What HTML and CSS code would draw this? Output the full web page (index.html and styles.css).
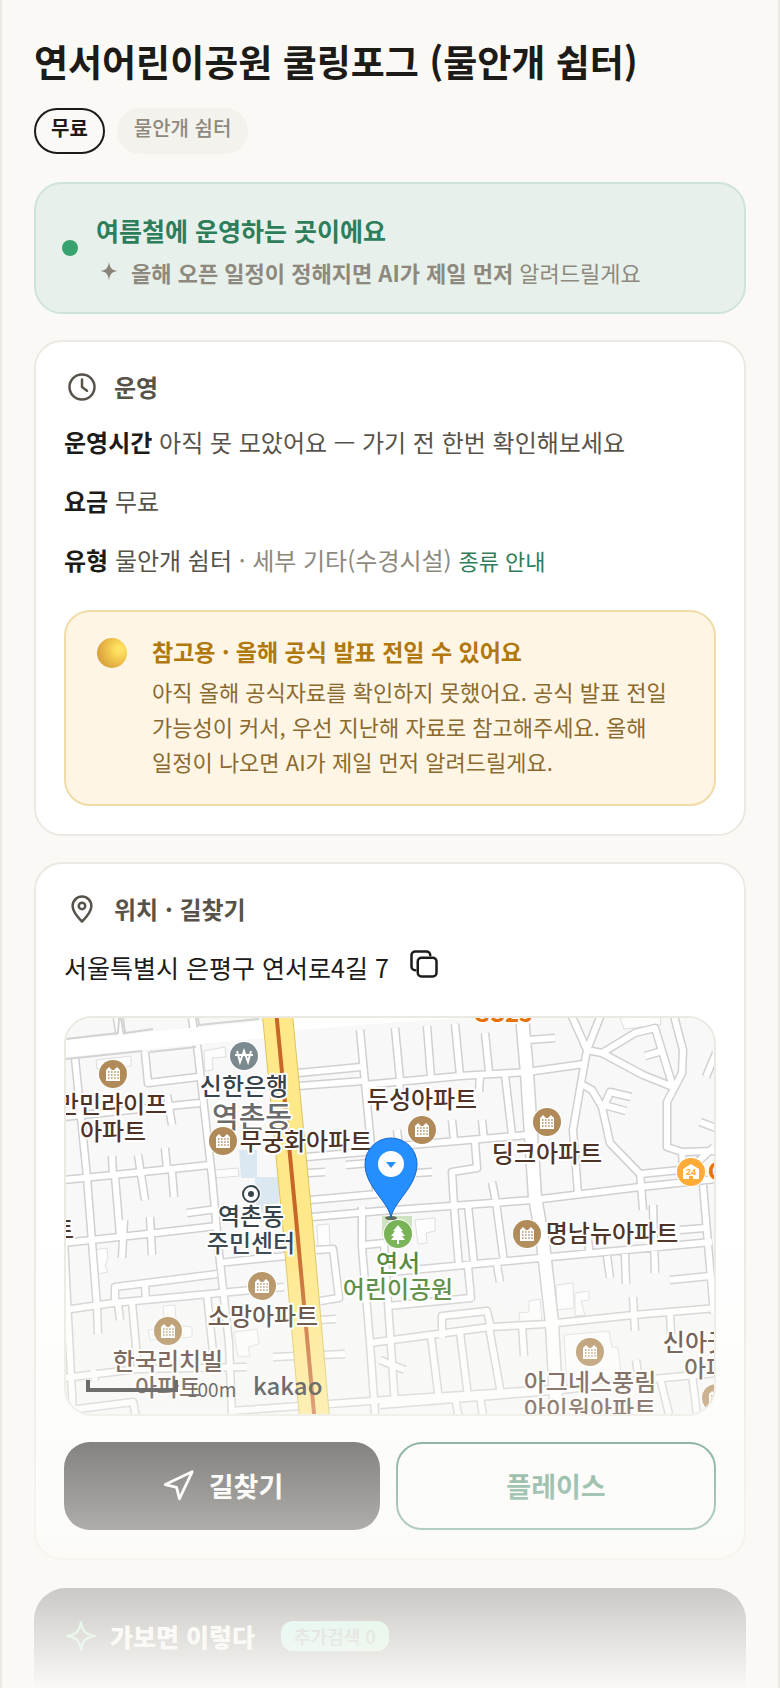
FILE: index.html
```html
<!DOCTYPE html>
<html lang="ko">
<head>
    <meta charset="UTF-8">
    <meta name="viewport" content="width=device-width, initial-scale=1.0">
    <title>연서어린이공원 쿨링포그 (물안개 쉼터)</title>
    <link rel="stylesheet" href="styles.css">
</head>
<body>
    <main class="page">
        <h1>연서어린이공원 쿨링포그 (물안개 쉼터)</h1>

        <div class="chips">
            <span class="chip chip-free">무료</span>
            <span class="chip">물안개 쉼터</span>
        </div>

        <section class="status">
            <span class="status-dot"></span>
            <div>
                <h2 class="status-title">여름철에 운영하는 곳이에요</h2>
                <p class="status-sub">
                    <svg class="spark" viewBox="0 0 24 24"><path d="M12 1c1 7 3 10 10 11-7 1-9 4-10 11-1-7-3-10-10-11 7-1 9-4 10-11z"/></svg>
                    <span><b>올해 오픈 일정이 정해지면 AI가 제일 먼저</b> 알려드릴게요</span>
                </p>
            </div>
        </section>

        <section class="card">
            <h2 class="card-head">
                <svg class="icon" viewBox="0 0 24 24"><circle cx="12" cy="12" r="10"/><path d="M12 6v6l4 3"/></svg>
                운영
            </h2>
            <p class="row"><b>운영시간</b> 아직 못 모았어요 — 가기 전 한번 확인해보세요</p>
            <p class="row"><b>요금</b> 무료</p>
            <p class="row"><b>유형</b> 물안개 쉼터 <span class="muted">· 세부 기타(수경시설)</span> <a class="guide" href="#">종류 안내</a></p>

            <div class="notice">
                <span class="orb"></span>
                <div class="notice-body">
                    <h3>참고용 · 올해 공식 발표 전일 수 있어요</h3>
                    <p>아직 올해 공식자료를 확인하지 못했어요. 공식 발표 전일 가능성이 커서, 우선 지난해 자료로 참고해주세요. 올해 일정이 나오면 AI가 제일 먼저 알려드릴게요.</p>
                </div>
            </div>
        </section>

        <section class="card">
            <h2 class="card-head">
                <svg class="icon" viewBox="0 0 24 24"><path d="M19.500 9.500c0 5.500-7.500 12.500-7.500 12.500S4.500 15 4.500 9.500a7.500 7.500 0 0 1 15 0z"/><circle cx="12" cy="9.500" r="2.600"/></svg>
                위치 · 길찾기
            </h2>
            <div class="address">
                <span>서울특별시 은평구 연서로4길 7</span>
                <button class="copy" type="button" aria-label="주소 복사">
                    <svg class="icon" viewBox="0 0 24 24"><rect x="7" y="7" width="15" height="15" rx="3"/><path d="M5 17a3 3 0 0 1-3-3V5a3 3 0 0 1 3-3h9a3 3 0 0 1 3 3"/></svg>
                </button>
            </div>

            <div class="map">
                <svg class="map-canvas" viewBox="66 1018 648 396" preserveAspectRatio="xMidYMid slice">
                    <defs>
                        <g id="apt">
                            <circle r="15" fill="#fff"/>
                            <circle r="14" fill="#b08b59"/>
                            <path d="M-7 7V-4l3-3 3 3h2l3-3 3 3V7z" fill="#fff"/>
                            <path d="M-5-2H6M-5 1H6M-5 4H6" stroke="#b08b59" stroke-width="1.500" stroke-dasharray="1.500 1.600"/>
                        </g>
                        <g id="streets">
                            <path d="M75 1058L87 1177 97 1307 98 1334M64 1240L73 1414M145 1052l3 31 50-6M197 1045l15 132 7 76 10 90 3 71"/>
                            <path d="M64 1117l66-7 70-7M64 1180l69-7 77-8M64 1243l83-9 70-8M64 1310l49-7 107-10 64-6M218 1263l68-7M187 1213l30-4"/>
                            <path d="M115 1305v-18l102-13M145 1285l1 15M112 1156l1 18M138 1155l7 45M165 1148l2 22M167 1095l5 30M172 1172l2 25M115 1176l5 60M124 1220l-2 38M150 1217l2 38M118 1304l2 16M132 1302l6 67M207 1295l8 76M64 1378l74-9 109-2M70 1410l63-8 3 14M93 1370l2 11M230 1411l170-12 156-10"/>
                            <path d="M117 1018l4 24M192 1018l2 14M298 1073l63-6M298 1086l66-5M360 1030l5 53 6 62 6 52M295 1158l80-7M346 1165l24-2M308 1173l17-1M310 1200l67-6M273 1357l72-3M320 1320l16-1M316 1250l17-1 6 49-19 3M312 1217l68-6 153-11 107-13 76-8"/>
                            <path d="M362 1207v40l8 96 5 71M364 1245l20-2M370 1343l120-16 57-3 86-9 84-7M395 1028l5 52M427 1026l4 52M455 1024l5 52M485 1033l4 39M364 1085l96-9 67-4 57-8M375 1148l152-13M505 1075l7 60M480 1075l-1 17M399 1080l2 20M452 1120l2 20M482 1120l2 20M397 1130l2 15M475 1142l2 26-25 4 2 34 5 61M432 1172l-16 1M492 1182l4 20M528 1040l27-2"/>
                            <path d="M570 1012l17 38-6 33-8 47 5 64M602 1012l-15 38 15 3 41 22 30 12M602 1053l33-20 20-5 18 59M673 1012l10 38-1 23-15 29v45l15 5 34-1M583 1085l9 5 10 17 8 36 30 31 50-5 24-22M605 1104l5-12 21 5M604 1105l22 6M645 1056l17-5M716 1053l-10 24M700 1122l16 6M640 1172l3 38M682 1150l1 20M703 1185l11 129"/>
                            <path d="M380 1273l160-15 172-16M680 1230l25-2M670 1280l40-4M588 1240l2 16M607 1256l3 22M625 1254l1 30M653 1205l2 68M468 1205l6 58M496 1202l8 60M468 1267l3 31-83 8M497 1265l3 17M384 1245l11 160M442 1338v-22l45-5 4 18M431 1336l8 64M460 1332l8 65M489 1327l12 67M522 1324l2 32M633 1297l2 34M670 1312l1 22M380 1405l160-13 40-4M636 1360l2 14M620 1382l97-9M660 1378l9 36M692 1375l5 39M455 1398l4 20M480 1396l3 20M380 1360l25 10"/>
                        </g>
                        <g id="avenues">
                            <path d="M521 1005l6 68 8 124 8 46 9 80 5 95"/>
                        </g>
                    </defs>

                    <rect x="60" y="1010" width="660" height="410" fill="#f8f8f8"/>
                    <path d="M382 1216h30v20h-30z" fill="#cfe3c0"/>
                    <g class="building">
                        <path d="M204 1051l21-4 1 10-14 1 1 12-8 1zM96 1060l35-4v10l-34 3zM94 1250l13-2 1 10-3 8 3 6-10 2zM163 1306l12-1 1 15h-12zM148 1330l35-4 9 1v10l-42 3zM234 1332l23-3 2 15-11 3 2 9-12 1zM317 1225l12-1 1 22-12 1zM415 1220l20-2v13l-9 2 1 10-9 1zM620 1018l40-3 1 10-37 4zM556 1285l17-2 1 25-17 2zM575 1293l14-2v9l-8 1 4 14-10 1zM519 1313l10-1v-11l11-2 2 22-22 2zM564 1335l45-4 3 16 6 1 4 34-55 4zM215 1170l23-2 1 8-23 2z"/>
                    </g>
                    <use href="#streets" class="road-edge"/>
                    <use href="#avenues" class="road-edge wide"/>
                    <use href="#streets" class="road"/>
                    <use href="#avenues" class="road wide"/>
                    <path d="M239 1150h18v27h22v37h-16l-7-8-1-28h-14z" fill="#dce8f1"/>
                    <path d="M60 1049l210-20M290 1022l90-7 160-11" stroke="#fff" stroke-width="17" fill="none"/>
                    <path d="M66 1039l52-6 1-15M123 1018l2 15 28-4M198 1018l1 7 60-6M66 1059l76-8M150 1052l46-5" class="edge-line"/>

                    <path d="M277 1010l20 208 18 206" class="main-road-side"/>
                    <path d="M277 1010l20 208 18 206" class="main-road"/>
                    <path d="M276 1010l20 208 19 206" class="main-line"/>

                    <text class="district" x="252" y="1128">역촌동</text>
                    <use href="#apt" x="113" y="1074"/>
                    <use href="#apt" x="223" y="1141"/>
                    <use href="#apt" x="262" y="1286"/>
                    <use href="#apt" x="168" y="1331"/>
                    <use href="#apt" x="422" y="1130"/>
                    <use href="#apt" x="547" y="1122"/>
                    <use href="#apt" x="527" y="1234"/>
                    <use href="#apt" x="590" y="1352"/>
                    <use href="#apt" x="716" y="1398"/>

                    <g transform="translate(244 1056)">
                        <circle r="15" fill="#fff"/>
                        <circle r="14" fill="#7c8a90"/>
                        <path d="M-7-5l3 11L0-5l4 11 3-11M-9-1H9" fill="none" stroke="#fff" stroke-width="2"/>
                    </g>
                    <g transform="translate(251 1194)">
                        <circle r="10" fill="#fff"/>
                        <circle r="8" fill="#fff" stroke="#37434b" stroke-width="2"/>
                        <circle r="3" fill="#37434b"/>
                    </g>
                    <g transform="translate(691 1172)">
                        <circle r="15" fill="#fff"/>
                        <circle r="14" fill="#ffab38"/>
                        <path d="M-8-3L0-8l8 5V7H2V4h-4v3h-6z" fill="#fff"/>
                        <text class="store-num" y="3">24</text>
                    </g>
                    <g transform="translate(398 1234)">
                        <circle r="15" fill="#fff"/>
                        <circle r="14" fill="#77b255"/>
                        <path d="M0-9l5 6H3l4 5H4l3 4H1v4h-2V6h-6l3-4h-3l4-5h-2z" fill="#fff"/>
                    </g>

                    <g class="place">
                        <text x="112" y="1113">만민라이프</text>
                        <text x="113" y="1140">아파트</text>
                        <text x="306" y="1150">무궁화아파트</text>
                        <text x="422" y="1108">두성아파트</text>
                        <text x="547" y="1162">딩크아파트</text>
                        <text x="612" y="1242">명남뉴아파트</text>
                        <text x="263" y="1325">소망아파트</text>
                        <text x="168" y="1370">한국리치빌</text>
                        <text x="168" y="1396">아파트</text>
                        <text x="590" y="1391">아그네스풍림</text>
                        <text x="590" y="1418">아이원아파트</text>
                        <text x="718" y="1351">신아굿모닝</text>
                        <text x="717" y="1377">아파트</text>
                        <text x="63" y="1238">트</text>
                    </g>
                    <g class="place public">
                        <text x="244" y="1095">신한은행</text>
                        <text x="251" y="1225">역촌동</text>
                        <text x="251" y="1252">주민센터</text>
                    </g>
                    <g class="place park">
                        <text x="398" y="1272">연서</text>
                        <text x="398" y="1298">어린이공원</text>
                    </g>
                    <g class="place store">
                        <text x="503" y="1022">GS25</text>
                        <text x="738" y="1180">GS25</text>
                    </g>

                    <ellipse cx="391" cy="1218" rx="6" ry="2" fill="#5c6b57"/>
                    <path d="M391 1218c-2-16-26-31-26-54a26 26 0 0 1 52 0c0 23-24 38-26 54z" fill="#258fff" stroke="#1767cf"/>
                    <circle cx="391" cy="1164" r="13" fill="#fff"/>
                    <path d="M386 1162h10l-5 6z" fill="#258fff"/>

                    <path d="M88 1380v10h88v-10" fill="none" stroke="#222" stroke-width="4"/>
                    <text class="scale" x="187" y="1397">100m</text>
                    <text class="kakao" x="253" y="1395">kakao</text>
                </svg>
            </div>

            <div class="actions">
                <a class="btn btn-primary" href="#">
                    <svg viewBox="0 0 24 24"><path d="M22 2l-9 19-2-8-8-2z"/></svg>
                    길찾기
                </a>
                <a class="btn btn-outline" href="#">플레이스</a>
            </div>
        </section>

        <section class="review">
            <h2 class="review-head">
                <svg viewBox="0 0 24 24"><path d="M12 1c1 7 4 10 11 11-7 1-10 4-11 11-1-7-4-10-11-11 7-1 10-4 11-11z"/></svg>
                가보면 이렇다
                <span class="badge">추가검색 0</span>
            </h2>
        </section>

        <div class="fade"></div>
    </main>
</body>
</html>
```

FILE: styles.css
```css
:root {
    --bg: #faf9f5;
    --ink: #1c1b18;
    --text: #57534a;
    --muted: #8e897e;
    --line: #ebe9e1;
    --green: #2e7d5b;
    --dark: #1c1b18;
}

* {
    box-sizing: border-box;
}

body {
    margin: 0;
    background: var(--bg);
    color: var(--text);
    font-family: "Noto Sans CJK KR", "Noto Sans", sans-serif;
    font-size: 24px;
    line-height: 40px;
    word-break: keep-all;
}

h1, h2, h3, p {
    margin: 0;
}

a {
    text-decoration: none;
}

.page {
    position: relative;
    display: flex;
    flex-direction: column;
    gap: 26px;
    height: 100vh;
    overflow: hidden;
    padding: 37px 32px 0;
    border: solid var(--line);
    border-width: 0 2px;
}

.page > * {
    flex-shrink: 0;
}

h1 {
    color: var(--ink);
    font-size: 37px;
    line-height: 48px;
    margin-bottom: -3px;
}

/* tags */
.chips {
    display: flex;
    gap: 12px;
    margin-bottom: 2px;
}

.chip {
    padding: 1px 15px 7px;
    border: 2px solid #f3f2ed;
    border-radius: 23px;
    background: #f3f2ed;
    color: var(--muted);
    font-size: 20px;
    font-weight: 500;
    line-height: 34px;
}

.chip-free {
    border-color: var(--ink);
    background: transparent;
    color: var(--ink);
    font-weight: 700;
}

/* season status */
.status {
    display: flex;
    align-items: center;
    gap: 18px;
    padding: 26px 26px 20px;
    border: 2px solid #cfe4d8;
    border-radius: 28px;
    background: #e7f0ea;
}

.status-dot {
    width: 16px;
    height: 16px;
    margin-bottom: 6px;
    border-radius: 50%;
    background: #38a36e;
}

.status-title {
    color: var(--green);
    font-size: 25px;
    line-height: 40px;
    margin-bottom: 2px;
}

.status-sub {
    display: flex;
    gap: 12px;
    color: var(--muted);
    font-size: 22px;
}

.spark {
    width: 20px;
    height: 20px;
    margin: 9px 0 0 3px;
    fill: #8a8479;
}

/* cards */
.card {
    padding: 27px 28px 28px;
    border: 2px solid var(--line);
    border-radius: 28px;
    background: #fff;
}

.card-head {
    display: flex;
    align-items: center;
    gap: 17px;
    padding-left: 3px;
    font-size: 24px;
    line-height: 36px;
}

.icon {
    display: block;
    width: 30px;
    height: 30px;
    fill: none;
    stroke: currentColor;
    stroke-width: 2;
    stroke-linecap: round;
    stroke-linejoin: round;
}

.row {
    margin-top: 19px;
}

.card-head + .row {
    margin-top: 17px;
}

.row b {
    color: var(--ink);
}

.muted {
    color: var(--muted);
}

.guide {
    color: var(--green);
    font-size: 22px;
}

.notice {
    display: flex;
    gap: 25px;
    margin-top: 30px;
    padding: 22px 31px 25px;
    border: 2px solid #efdca8;
    border-radius: 26px;
    background: #fff5e4;
}

.orb {
    flex: none;
    width: 30px;
    height: 30px;
    margin-top: 4px;
    border-radius: 50%;
    background: radial-gradient(circle at 75% 38%, #ffe260 10%, #f0c44d 40%, #d9a33c 75%, #d68a55 100%);
}

.notice h3 {
    color: #b0780d;
    font-size: 23px;
    line-height: 34px;
    margin-bottom: 6px;
}

.notice p {
    color: #8a6a2f;
    font-size: 22px;
    line-height: 35px;
}

/* location */
.address {
    display: flex;
    align-items: center;
    gap: 20px;
    height: 44px;
    margin: 18px 0 27px;
    color: var(--ink);
    font-size: 25px;
}

.copy {
    padding: 0 0 6px;
    border: 0;
    background: none;
    color: var(--ink);
    cursor: pointer;
}

.map {
    height: 400px;
    border: 2px solid var(--line);
    border-radius: 28px;
    overflow: hidden;
}

.map-canvas {
    display: block;
    width: 100%;
    height: 100%;
}

.building {
    fill: #fdfdfd;
    stroke: #dedede;
}

.road-edge,
.road {
    fill: none;
    stroke-linejoin: round;
}

.road-edge {
    stroke: #d0d0d0;
    stroke-width: 9px;
}

.road {
    stroke: #fff;
    stroke-width: 6px;
}

.road-edge.wide {
    stroke-width: 15px;
}

.road.wide {
    stroke-width: 12px;
}

.edge-line {
    fill: none;
    stroke: #d3d3d3;
    stroke-width: 2px;
}

.main-road-side {
    fill: none;
    stroke: #d9c55c;
    stroke-width: 31px;
}

.main-road {
    fill: none;
    stroke: #ffe88a;
    stroke-width: 29px;
}

.main-line {
    fill: none;
    stroke: #c8662a;
    stroke-width: 4px;
}

.map text {
    text-anchor: middle;
    paint-order: stroke;
    stroke: #fff;
    stroke-width: 4px;
    stroke-linejoin: round;
}

.place {
    fill: #4e3426;
    font-size: 24px;
    font-weight: 500;
}

.public {
    fill: #37434b;
}

.park {
    fill: #4a8231;
}

.store {
    fill: #e8710a;
    font-weight: 700;
}

.map .district {
    fill: #6b6b6b;
    font-size: 29px;
    font-weight: 500;
}

.map .store-num {
    fill: #ffab38;
    stroke: none;
    font: 700 9px "Open Sans", sans-serif;
}

.map .scale,
.map .kakao {
    fill: #222;
    stroke: none;
    text-anchor: start;
}

.map .scale {
    font-size: 19px;
    font-weight: 400;
}

.map .kakao {
    font-size: 24px;
    font-weight: 500;
}

.actions {
    display: flex;
    gap: 16px;
    margin-top: 26px;
}

.btn {
    flex: 1;
    display: flex;
    align-items: center;
    justify-content: center;
    gap: 14px;
    height: 88px;
    border-radius: 26px;
    font-size: 27px;
    font-weight: 700;
}

.btn svg {
    width: 34px;
    height: 34px;
    fill: none;
    stroke: currentColor;
    stroke-width: 2;
    stroke-linejoin: round;
}

.btn-primary {
    background: var(--dark);
    color: #fff;
}

.btn-outline {
    border: 2px solid var(--green);
    background: #fff;
    color: var(--green);
}

/* visit summary */
.review {
    height: 300px;
    margin-top: 2px;
    padding: 30px 32px;
    border-radius: 32px;
    background: var(--dark);
}

.review-head {
    display: flex;
    align-items: center;
    gap: 14px;
    color: #fff;
    font-size: 25px;
    font-weight: 900;
    line-height: 36px;
}

.review-head svg {
    width: 30px;
    height: 30px;
    fill: none;
    stroke: #6fdcae;
    stroke-width: 2;
    stroke-linejoin: round;
}

.badge {
    margin-left: 12px;
    padding: 0 13px;
    border-radius: 12px;
    background: linear-gradient(90deg, #7ff0e4, #7fe8b0);
    color: #4f5a55;
    font-size: 18px;
    font-weight: 700;
    line-height: 30px;
}

.fade {
    position: absolute;
    inset: auto 0 0;
    height: 460px;
    background: linear-gradient(rgba(250, 249, 245, 0), #faf9f5);
    pointer-events: none;
}
```
